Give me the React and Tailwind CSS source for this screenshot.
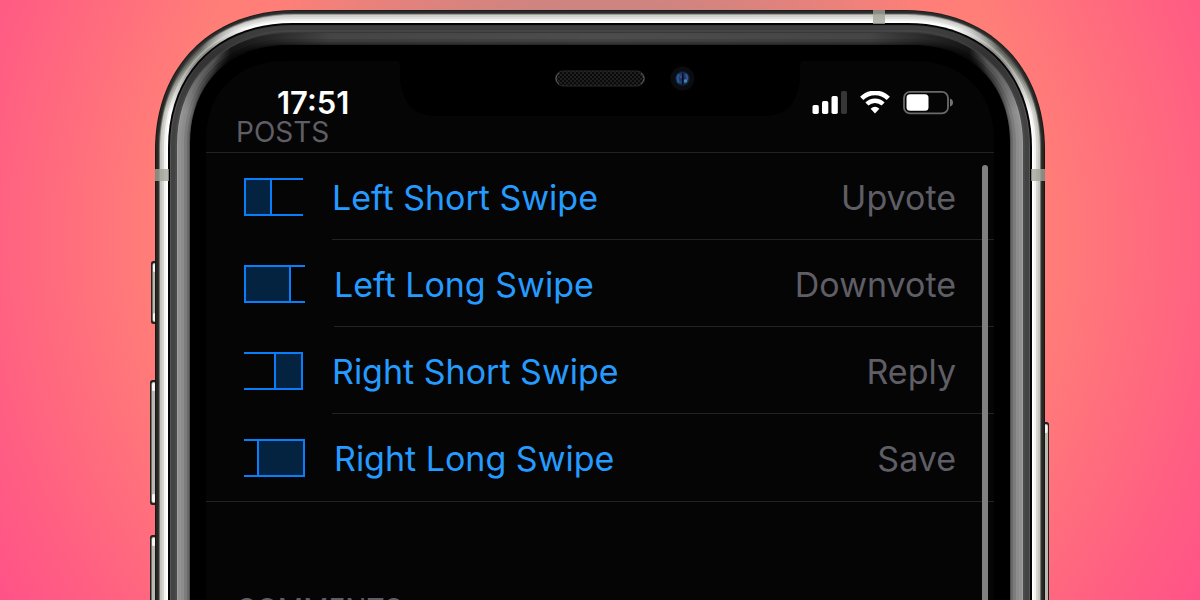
const swipeRows = [
  { label: 'Left Short Swipe', value: 'Upvote', side: 'left', width: 59, fill: 28 },
  { label: 'Left Long Swipe', value: 'Downvote', side: 'left', width: 61, fill: 47 },
  { label: 'Right Short Swipe', value: 'Reply', side: 'right', width: 59, fill: 28 },
  { label: 'Right Long Swipe', value: 'Save', side: 'right', width: 61, fill: 47 },
]

// Nested shells of the phone body: distance from the edge, then the shade on top, in the corner and on the sides
const shells = [
  [0, '#1c1c1b', '#1a1a1a', '#161615'],
  [1, '#2b2b2b', '#2b2b2a', '#262625'],
  [3, '#484846', '#3c3c3a', '#333331'],
  [4, '#9c9c99', '#4a4a47', '#77776f'],
  [5, '#cfcfcc', '#62625e', '#c4c3bd'],
  [7, '#dededc', '#80807a', '#d8d6d0'],
  [9, '#f0f0ef', '#a8a8a2', '#f3f3f1'],
  [11, '#ffffff', '#8c8c86', '#ffffff'],
  [13, '#050505', '#050505', '#050505'],
  [15, '#383838', '#3c3c3c', '#565656'],
  [16, '#3f3f3f', '#333333', '#424242'],
  [20, '#474747', '#333333', '#4a4a4a'],
  [22, '#353535', '#444444', '#a0a0a0'],
  [23, '#484848', '#555555', '#929292'],
  [26, '#505050', '#484848', '#8c8c8c'],
  [29, '#5a5a5a', '#303030', '#7c7c7c'],
  [32, '#606060', '#202020', '#686868'],
  [34, '#626262', '#141414', '#505050'],
]

function shellPath(inset) {
  const r = 140 - inset * 1.2
  const k = r * 0.4
  const left = 5 + inset
  const right = 895 - inset
  const top = 10 + inset
  return `M${left} 640V${top + r}C${left} ${top + k} ${left + k} ${top} ${left + r} ${top}H${right - r}C${right - k} ${top} ${right} ${top + k} ${right} ${top + r}V640Z`
}

function SideButton({ x, y, height }) {
  return (
    <g>
      <rect x={x} y={y} width="7" height={height} rx="2.5" fill="#23231f" />
      <rect x={x + 1.5} y={y + 2} width="4.5" height={height - 4} rx="2" fill="#b9b8b1" />
      <rect x={x + 2} y={y + 3} width="3.5" height="8" rx="1.5" fill="#f5f5f3" />
      <rect x={x + 2} y={y + height - 11} width="3.5" height="8" rx="1.5" fill="#f5f5f3" />
    </g>
  )
}

function PhoneBody() {
  return (
    <svg viewBox="0 0 900 600" className="absolute inset-x-0 top-0 w-full" aria-hidden="true">
      <defs>
        {shells.map(([inset, top, corner, side]) => (
          <linearGradient key={inset} id={`shell-${inset}`} gradientUnits="userSpaceOnUse" x1="0" y1="0" x2="0" y2="200">
            <stop offset="0.14" stopColor={top} />
            <stop offset="0.25" stopColor={corner} />
            <stop offset="0.32" stopColor={corner} />
            <stop offset="0.56" stopColor={side} />
          </linearGradient>
        ))}
        <linearGradient id="glare" gradientUnits="userSpaceOnUse" x1="0" y1="0" x2="900" y2="0">
          <stop offset="0.07" stopColor="#000" stopOpacity="0" />
          <stop offset="0.09" stopColor="#000" stopOpacity="0.75" />
          <stop offset="0.2" stopColor="#000" stopOpacity="0.1" />
          <stop offset="0.5" stopColor="#000" stopOpacity="0" />
          <stop offset="0.8" stopColor="#000" stopOpacity="0.1" />
          <stop offset="0.91" stopColor="#000" stopOpacity="0.75" />
          <stop offset="0.93" stopColor="#000" stopOpacity="0" />
        </linearGradient>
        <pattern id="mesh" width="4" height="4" patternUnits="userSpaceOnUse">
          <rect width="4" height="4" fill="#0a0a0a" />
          <circle cx="1" cy="1" r="0.9" fill="#292929" />
          <circle cx="3" cy="3" r="0.9" fill="#292929" />
        </pattern>
        <radialGradient id="lens">
          <stop offset="0" stopColor="#1c2750" />
          <stop offset="0.6" stopColor="#1c4678" />
          <stop offset="1" stopColor="#0a1420" />
        </radialGradient>
      </defs>

      <SideButton x={1} y={261} height={63} />
      <SideButton x={0} y={380} height={125} />
      <SideButton x={0} y={535} height={125} />
      <SideButton x={892} y={422} height={220} />

      {shells.map(([inset]) => (
        <path key={inset} d={shellPath(inset)} fill={`url(#shell-${inset})`} />
      ))}
      <path d={shellPath(23)} fill="url(#glare)" />
      <path d={shellPath(35)} fill="#000" />

      {/* antenna bands */}
      <g fill="#a3a499" fillOpacity="0.8">
        <rect x="723" y="10" width="12" height="14" />
        <rect x="5" y="169" width="14" height="12" />
        <rect x="881" y="169" width="14" height="12" />
      </g>

      {/* display area and notch */}
      <path d={shellPath(51)} fill="#050505" />
      <path d="M244 59Q250 60 250 68V74C250 100 262 116 286 116H614C638 116 650 100 650 74V68Q650 60 656 59Z" fill="#000" />
      <rect x="405.5" y="71" width="89" height="15" rx="7.5" fill="url(#mesh)" stroke="#2b2b2b" />
      <path d="M409 73Q403 78.5 409 84M491 73Q497 78.5 491 84" fill="none" stroke="#5a5a5a" />
      <circle cx="532.5" cy="78.5" r="12" fill="#0b0c0f" />
      <circle cx="532.5" cy="78.5" r="7.5" fill="url(#lens)" />
      <path d="M529 74Q526 78 529 83" stroke="#265a92" strokeWidth="2" fill="none" />
      <path d="M536 74Q538 77 537 80" stroke="#394f92" strokeWidth="2" fill="none" />
      <circle cx="535.5" cy="81" r="1.8" fill="#4585b4" />
      <circle cx="531" cy="77" r="1.2" fill="#5a3a8a" />
      <rect x="532" y="73" width="1.5" height="12" fill="#0a0b16" />
    </svg>
  )
}

function SignalIcon() {
  return (
    <svg width="35" height="24" viewBox="0 0 35 24" fill="#fff" role="img" aria-label="Signal">
      <rect x="0.5" y="14" width="6.3" height="9" rx="1.7" />
      <rect x="10" y="10" width="6.3" height="13" rx="1.7" />
      <rect x="19.5" y="5" width="6.3" height="18" rx="1.7" />
      <rect x="29" y="0" width="6" height="23" rx="1.7" fill="#363636" />
    </svg>
  )
}

function WifiIcon() {
  return (
    <svg width="30" height="24" viewBox="0 0 30 24" fill="none" stroke="#fff" role="img" aria-label="Wi-Fi">
      <path d="M1.700 7.300A19 19 0 0 1 28.300 7.300" strokeWidth="4.600" />
      <path d="M6.900 13A11.600 11.600 0 0 1 23.100 13" strokeWidth="4.400" />
      <path d="M10.600 17.800Q15 13.800 19.400 17.800L15 22.600Z" fill="#fff" stroke="none" />
    </svg>
  )
}

function BatteryIcon() {
  return (
    <svg width="50" height="24" viewBox="0 0 50 24" role="img" aria-label="Battery">
      <rect x="1" y="0.900" width="44" height="21.500" rx="6" fill="none" stroke="#6a6a6a" strokeWidth="1.800" />
      <rect x="3.500" y="3.200" width="22" height="16.500" rx="3.500" fill="#fff" />
      <path d="M47 7.500Q50 8.500 50 11.500T47 15.500Z" fill="#747474" />
    </svg>
  )
}

function SwipeIcon({ side, width, fill }) {
  const divider = side === 'left' ? fill - 1 : width - fill
  const start = side === 'left' ? 1 : divider
  const edge = side === 'left' ? 1 : width - 1
  return (
    <svg width={width} height="38" viewBox={`0 0 ${width} 38`} className="shrink-0" aria-hidden="true">
      <rect x={start} y="1" width={fill - 2} height="36" fill="#032340" />
      <path
        d={`M0 1H${width}M0 37H${width}M${edge} 0V38M${divider} 1V37`}
        fill="none"
        stroke="#0a7dfa"
        strokeWidth="2"
      />
    </svg>
  )
}

function SwipeRow({ label, value, side, width, fill, last }) {
  return (
    <li>
      <button type="button" className="flex h-[87px] w-full items-center gap-[29px] pl-[38px] text-left">
        <SwipeIcon side={side} width={width} fill={fill} />
        <span
          className={`flex h-full min-w-0 flex-1 items-center justify-between pt-0.5 pr-[38px] text-[34px] ${last ? '' : 'border-b border-[#222329]'}`}
        >
          <span className="text-[#259bff]">{label}</span>
          <span className="text-[#5f5e66]">{value}</span>
        </span>
      </button>
    </li>
  )
}

export default function App() {
  return (
    <main className="h-screen overflow-hidden bg-[radial-gradient(circle_at_50%_240px,#a08888_0px,#cf8480_240px,#ff7f78_400px,#ff7e78_445px,#ff6281_600px,#ff5288_700px)] font-['Inter','Liberation_Sans',sans-serif]">
      <div className="relative mx-auto w-full max-w-[900px] px-14 pt-[60px]">
        <PhoneBody />
        <div className="relative">
          <header className="flex items-center justify-between pt-7 pr-[41px] pl-[71px]">
            <time className="text-[31px] leading-[30px] font-semibold text-white">17:51</time>
            <div className="flex items-center gap-[13px]">
              <SignalIcon />
              <WifiIcon />
              <BatteryIcon />
            </div>
          </header>

          <section>
            <h2 className="pb-1.5 pl-[30px] text-[28px] leading-7 text-[#5f5e66]">POSTS</h2>
            <ul className="border-y border-[#222329]">
              {swipeRows.map((row, index) => (
                <SwipeRow key={row.label} {...row} last={index === swipeRows.length - 1} />
              ))}
            </ul>
          </section>

          <section className="pt-[93px]">
            <h2 className="pl-[30px] text-[28px] leading-7 text-[#5f5e66]">COMMENTS</h2>
          </section>

          {/* scroll indicator */}
          <div className="absolute top-[105px] right-1.5 bottom-0 w-1.5 rounded-t-full bg-[#808080]" />
        </div>
      </div>
    </main>
  )
}
